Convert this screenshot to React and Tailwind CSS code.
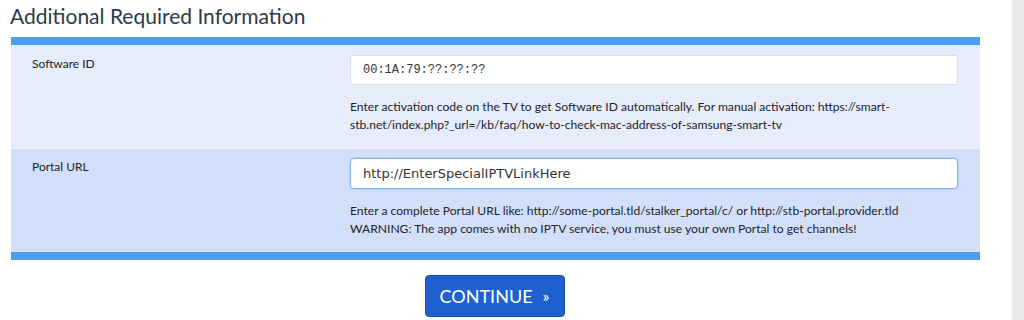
export default function App() {
  return (
    <div className="flex h-[320px] w-[1024px] overflow-hidden bg-white font-['Lato',sans-serif] text-[#212529]">
      <div className="flex-1 pl-[11px] pr-[32px]">
        <h2 className="pt-[3px] pl-0 text-[21px] leading-[26px] text-[#2d3a4a] -ml-[1px]">
          Additional Required Information
        </h2>
        <div className="mt-[8px] border-t-[8px] border-b-[8px] border-[#4a9ff5]">
          {/* Software ID row */}
          <div className="flex h-[104px] bg-[#e6ecf9] border-b border-[#eef2fb]">
            <div className="w-[339px] pl-[21px] pt-[10px] text-[12px] leading-[18px]">Software ID</div>
            <div className="flex-1 pr-[22px] pt-[10px]">
              <div className="flex h-[30px] items-center rounded-[3px] border border-[#d9dee6] bg-white pl-[12px] font-['Liberation_Mono',monospace] text-[12px] text-[#333]">
                00:1A:79:??:??:??
              </div>
              <p className="mt-[13px] text-[12.1px] leading-[18px]">
                Enter activation code on the TV to get Software ID automatically. For manual activation: https://smart-
                <br />
                stb.net/index.php?_url=/kb/faq/how-to-check-mac-address-of-samsung-smart-tv
              </p>
            </div>
          </div>
          {/* Portal URL row */}
          <div className="flex h-[103px] bg-[#d3dff8] border-b border-[#dfe7f9]">
            <div className="w-[339px] pl-[21px] pt-[9px] text-[12px] leading-[18px]">Portal URL</div>
            <div className="flex-1 pr-[22px] pt-[9px]">
              <div className="flex h-[31px] items-center rounded-[4px] border border-[#86b1ee] bg-white pl-[12px] font-['DejaVu_Sans',sans-serif] text-[13px] text-[#333] shadow-[0_0_0_1px_rgba(134,177,238,0.25)]">
                http://EnterSpecialIPTVLinkHere
              </div>
              <p className="mt-[13px] text-[12.1px] leading-[18px]">
                Enter a complete Portal URL like: http://some-portal.tld/stalker_portal/c/ or http://stb-portal.provider.tld
                <br />
                WARNING: The app comes with no IPTV service, you must use your own Portal to get channels!
              </p>
            </div>
          </div>
        </div>
        <div className="flex justify-center pt-[15px] pr-[2px]">
          <button className="flex h-[42px] w-[140px] items-center justify-center gap-[10px] rounded-[4px] border border-[#1a4fa8] bg-[#1f62cf] text-[18px] text-white">
            <span>CONTINUE</span>
            <span className="text-[16px]">»</span>
          </button>
        </div>
      </div>
      <div className="w-[12px] bg-[#e9e9e9]" />
    </div>
  );
}
